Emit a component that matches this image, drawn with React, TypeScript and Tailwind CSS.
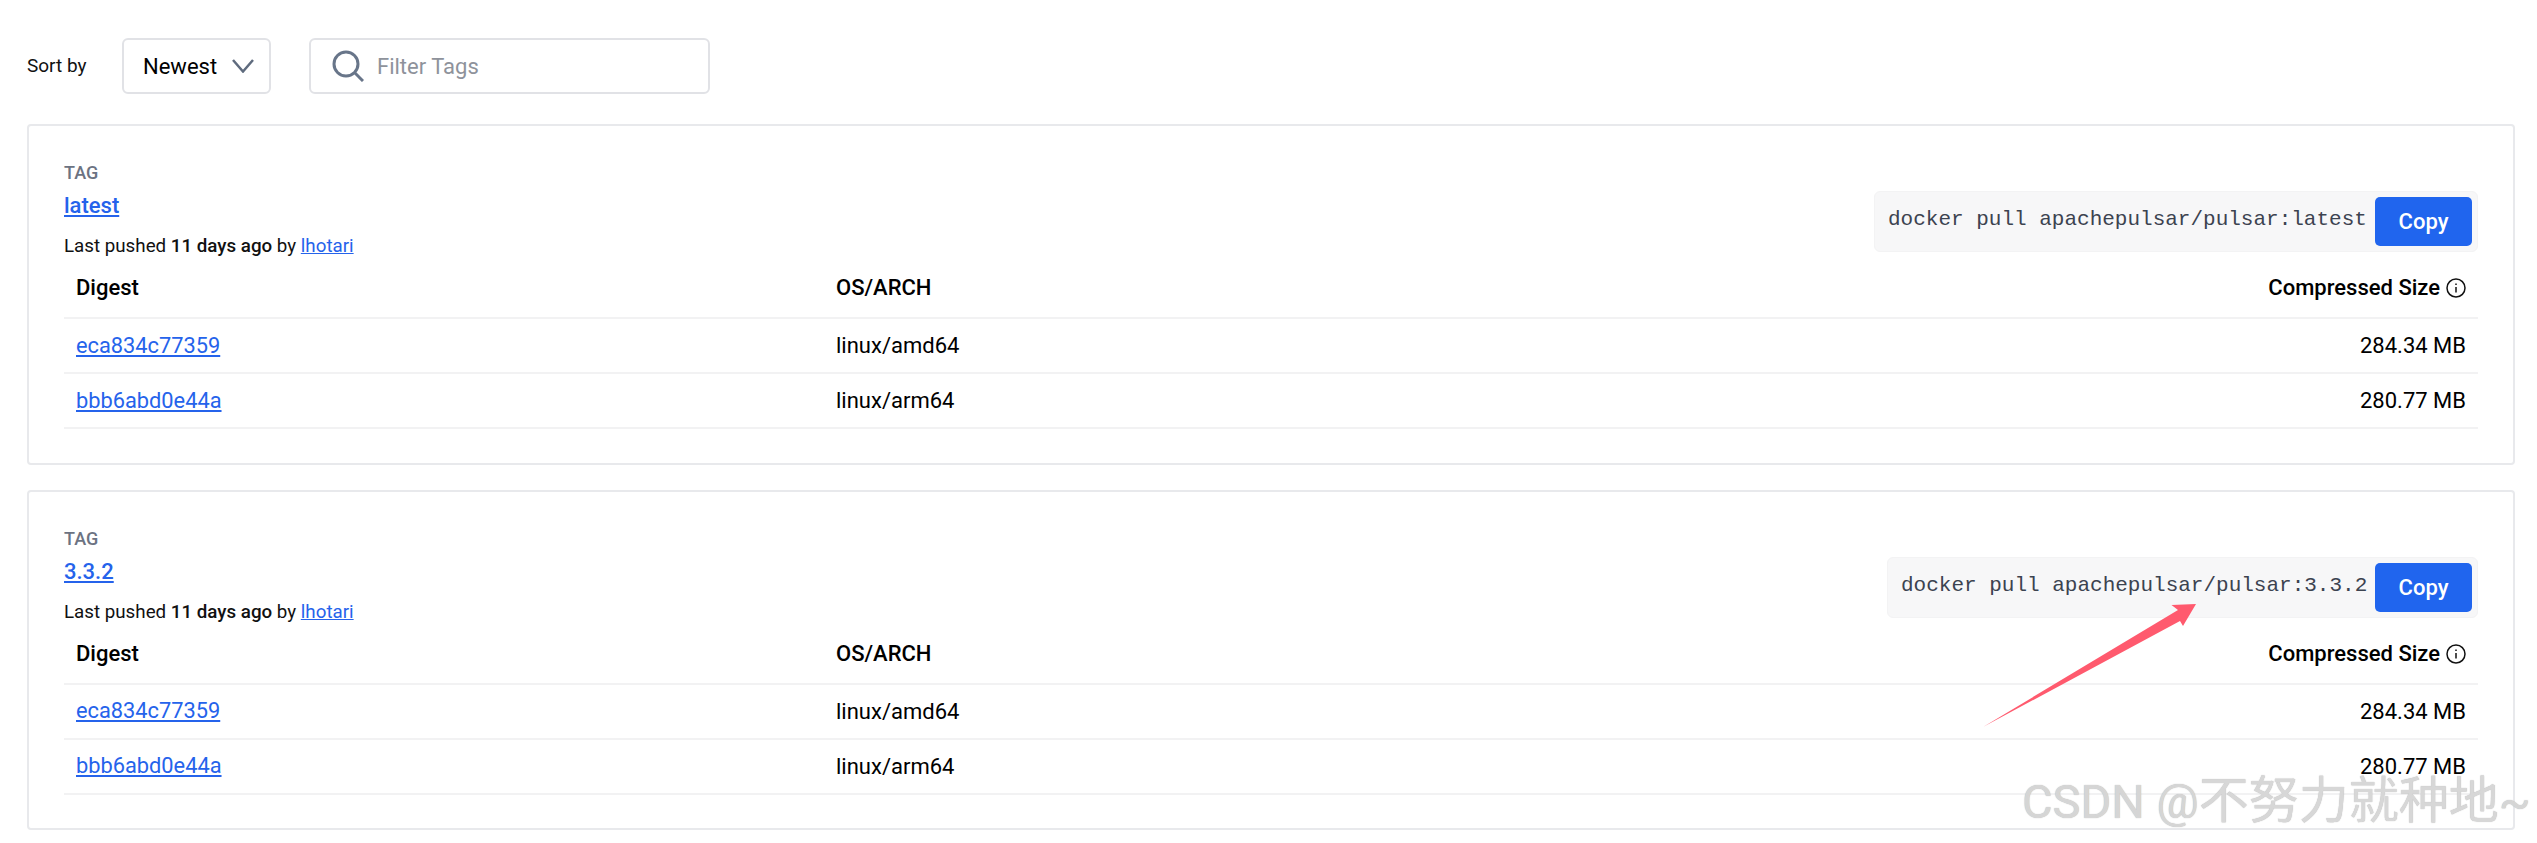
import React from "react";

interface TagCardProps {
  tag: string;
  boxWidth: string;
}

const TagCard = ({ tag, boxWidth }: TagCardProps) => {
  return (
    <div className="h-[340.5px] border-2 border-[#e8e9ec] rounded-[4px] bg-white pl-[35px] pr-[35px]">
      <div className="flex justify-between items-start h-[141px]">
        <div className="pt-[34px]">
          <div className="text-[18px] leading-[26px] font-medium text-[#6c7382]">TAG</div>
          <a href="#" className="block mt-[5px] text-[22px] leading-[30px] font-medium text-[#2563eb] underline w-fit">
            {tag}
          </a>
          <div className="mt-[12px] text-[18.75px] leading-[26px] text-[#111]">
            Last pushed <span className="font-medium">11 days ago</span> by{" "}
            <a href="#" className="text-[#2563eb] underline">
              lhotari
            </a>
          </div>
        </div>
        <div className={`mt-[65px] h-[61px] flex items-center justify-between rounded-[6px] border border-[#f3f3f4] bg-[#f7f7f8] pl-[13px] pr-[5px] ${boxWidth}`}>
          <span className="font-['Liberation_Mono',monospace] text-[21px] leading-[30px] -mt-[3px] text-[#3c4350] whitespace-pre">
            docker pull apachepulsar/pulsar:{tag}
          </span>
          <button className="w-[97px] h-[49px] rounded-[5px] bg-[#2065ee] text-white text-[22px] font-medium">
            Copy
          </button>
        </div>
      </div>
      <div className="flex items-start h-[52px] pt-[7px] border-b-2 border-[#f2f2f3] pl-[12px] pr-[12px] text-[22px] leading-[28px] font-medium text-black">
        <div className="w-[760px]">Digest</div>
        <div className="flex-1">OS/ARCH</div>
        <div className="flex items-center gap-[6px]">
          Compressed Size
          <svg width="20" height="20" viewBox="0 0 20 20" fill="none" stroke="#111" strokeWidth="1.5">
            <circle cx="10" cy="10" r="9" />
            <path d="M10 9v5.5" />
            <path d="M10 5.5v1.5" />
          </svg>
        </div>
      </div>
      <DigestRow digest="eca834c77359" arch="linux/amd64" size="284.34 MB" />
      <DigestRow digest="bbb6abd0e44a" arch="linux/arm64" size="280.77 MB" />
    </div>
  );
};

const DigestRow = ({ digest, arch, size }: { digest: string; arch: string; size: string }) => {
  return (
    <div className="flex items-center h-[55px] border-b-2 border-[#f2f2f3] pl-[12px] pr-[12px] text-[22px] text-black">
      <div className="w-[760px]">
        <a href="#" className="text-[21.8px] text-[#2563eb] underline">
          {digest}
        </a>
      </div>
      <div className="flex-1">{arch}</div>
      <div>{size}</div>
    </div>
  );
};

export default function App() {
  return (
    <div className="relative w-[2537px] h-[843px] overflow-hidden bg-white font-['Roboto',sans-serif] pl-[27px] pr-[22px] pt-[38px]">
      <div className="flex items-center h-[56px] mb-[30px]">
        <span className="w-[95px] text-[19px] text-[#111]">Sort by</span>
        <div className="flex items-center justify-between w-[149px] h-[56px] border-2 border-[#e1e2e6] rounded-[6px] pl-[19px] pr-[15px] text-[22px] text-black">
          Newest
          <svg width="22" height="14" viewBox="0 0 22 14" fill="none" stroke="#5f6b7e" strokeWidth="2.5">
            <path d="M1 1l10 11.5L21 1" />
          </svg>
        </div>
        <div className="flex items-center w-[401px] h-[56px] border-2 border-[#e1e2e6] rounded-[6px] ml-[38px] pl-[21px]">
          <svg width="32" height="32" viewBox="0 0 32 32" fill="none" stroke="#687589" strokeWidth="3">
            <circle cx="14" cy="14" r="12" />
            <path d="M23 23l8 8" />
          </svg>
          <span className="ml-[13px] text-[22px] text-[#8e929b]">Filter Tags</span>
        </div>
      </div>
      <div className="flex flex-col gap-[25px]">
        <TagCard tag="latest" boxWidth="w-[604px]" />
        <TagCard tag="3.3.2" boxWidth="w-[591px]" />
      </div>
      <svg className="absolute left-[1980px] top-[600px]" width="220" height="130" viewBox="1980 600 220 130">
        <polygon points="1983,727 2178,610 2171.5,605 2196,604 2183,626 2180,621" fill="#ff5a6e" />
      </svg>
      <div className="absolute left-[2022px] top-[768px] whitespace-nowrap font-['Roboto','Noto_Sans_CJK_SC',sans-serif] text-[47px] leading-[66px] text-[#dcdcdc]/90 [text-shadow:0_0_1px_#a8a8a8]">
        CSDN @<span className="text-[50px]">不努力就种地</span>~
      </div>
    </div>
  );
}
